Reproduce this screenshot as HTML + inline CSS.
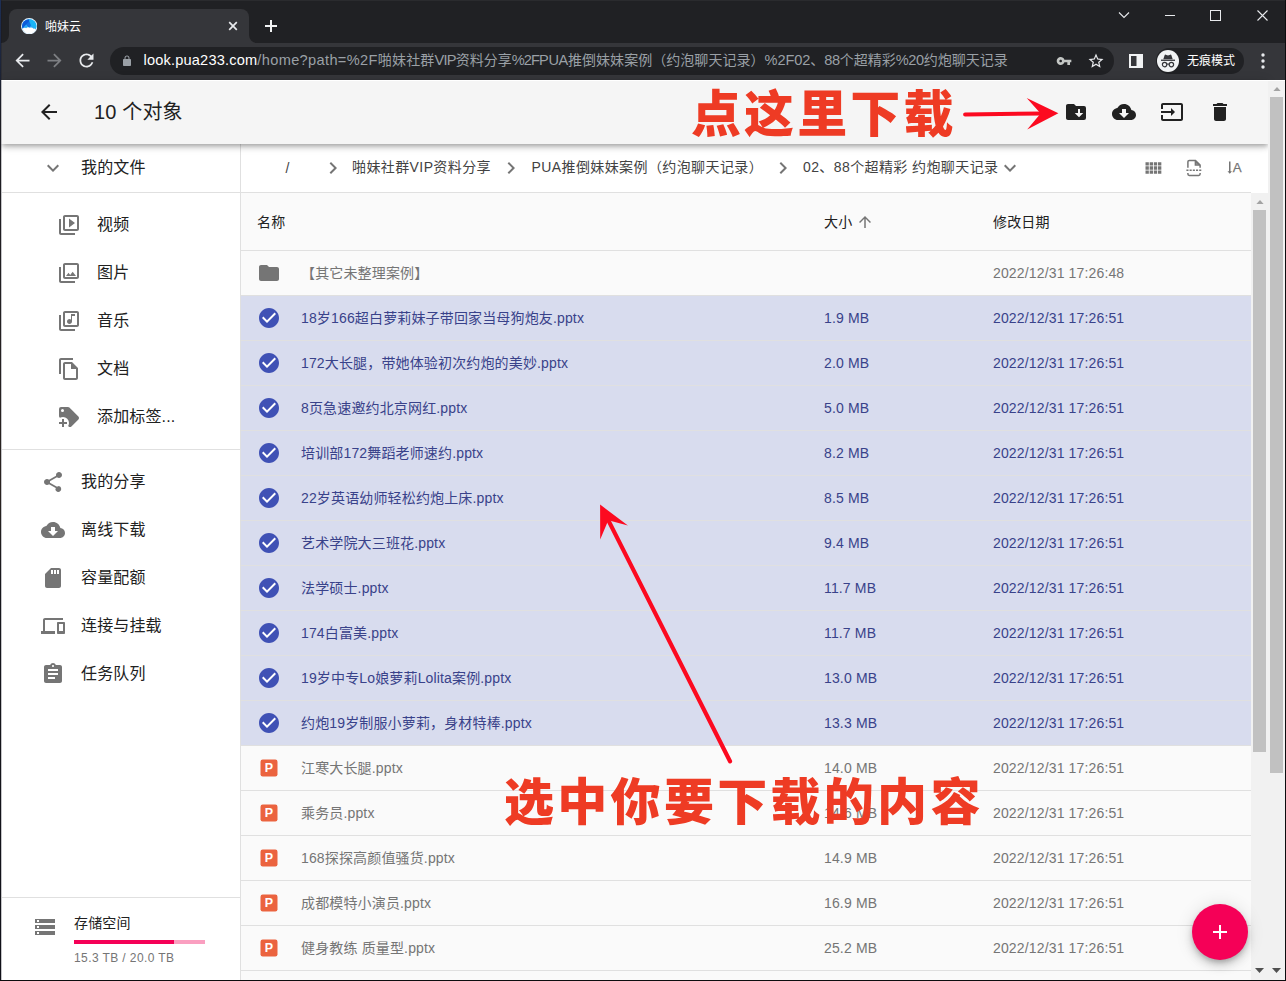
<!DOCTYPE html>
<html lang="zh-CN">
<head>
<meta charset="utf-8">
<title>啪妹云</title>
<style>
*{box-sizing:border-box;margin:0;padding:0}
html,body{width:1286px;height:981px;overflow:hidden;background:#fff}
body{position:relative;font-family:"Liberation Sans","Noto Sans CJK SC",sans-serif;font-size:14px;color:#212121}
.abs{position:absolute}
svg{display:block}
.t{position:absolute;white-space:nowrap;line-height:1}
/* chrome */
#tabbar{left:0;top:0;width:1286px;height:43px;background:#202124;border-top:1px solid #2a2b2e}
#tab{left:9px;top:9px;width:240px;height:34px;background:#35363a;border-radius:8px 8px 0 0}
#toolbar{left:0;top:43px;width:1286px;height:37px;background:#35363a}
#pill{left:110px;top:47px;width:1004px;height:28px;border-radius:14px;background:#202124}
#incog{left:1156px;top:48px;width:88px;height:26px;border-radius:13px;background:#202124}
/* app */
#appbar,#side,#main{letter-spacing:.15px}
#appbar{left:2px;top:80px;width:1266px;height:64px;background:#f5f5f5;box-shadow:0 2px 4px -1px rgba(0,0,0,.2),0 4px 5px 0 rgba(0,0,0,.14),0 1px 10px 0 rgba(0,0,0,.12);z-index:5}
#side{left:2px;top:144px;width:238px;height:837px;background:#fff}
#main{left:240px;top:144px;width:1011px;height:837px;background:#fafafa;border-left:1px solid #e0e0e0}
.sitem{position:absolute;left:0;width:238px;height:48px}
.sitem .t{font-size:16px;color:#212121}
.bc{letter-spacing:.4px}
.hl{position:absolute;height:1px;background:#e0e0e0}
.row{position:absolute;left:1px;width:1010px;height:45px;border-bottom:1px solid #e0e0e0;color:#757575}
.row.sel{background:#d8dcee;color:#39428a}
.row .t{font-size:14px;top:15px}
.row .n{left:60px}
.row .s{left:583px}
.row .d{left:752px}
.row svg{position:absolute;left:16px;top:10px}
.anno{position:absolute;white-space:nowrap;font-family:"Noto Sans CJK SC","Liberation Sans",sans-serif;font-weight:900;color:#ee3b24;line-height:1;z-index:20}
</style>
</head>
<body>
<!-- ============ browser chrome ============ -->
<div id="tabbar" class="abs"></div>
<div id="tab" class="abs"></div>
<div id="toolbar" class="abs"></div>
<div id="pill" class="abs"></div>
<div id="incog" class="abs"></div>

<!-- left tab curve hints -->
<svg class="abs" style="left:1px;top:35px" width="8" height="8"><path d="M8 0v8H0A8 8 0 0 0 8 0z" fill="#35363a"/></svg>
<svg class="abs" style="left:249px;top:35px" width="8" height="8"><path d="M0 0v8h8A8 8 0 0 1 0 0z" fill="#35363a"/></svg>
<!-- favicon -->
<svg class="abs" style="left:20.800px;top:17.800px" width="16.400" height="16.400" viewBox="0 0 16 16"><circle cx="8" cy="8" r="8" fill="#e3f2fd"/><circle cx="8" cy="8" r="6.900" fill="#29a9f5"/><path d="M8 1.100A6.900 6.900 0 0 0 1.400 10.200L5.200 6.200 8 9.400z" fill="#0d5bd8"/><path d="M8 1.100v8.300l1.800-2.300 4.700 3.600A6.900 6.900 0 0 0 8 1.100z" fill="#19b5f7"/><path d="M5.200 6.200L8 9.400 9.800 7.100 8 3.200z" fill="#1273e6"/><path d="M1.500 10.600c.9-1 2.300-1.300 3.400-.7.900-1.100 2.700-1.300 3.800-.3 1.300-.6 2.700-.2 3.400.8.900-.2 1.700 0 2.300.5A6.900 6.900 0 0 1 1.500 10.600z" fill="#fff"/></svg>
<div class="t" style="left:45px;top:21px;font-size:12px;color:#fff">啪妹云</div>
<svg class="abs" style="left:228px;top:21px" width="10" height="10" viewBox="0 0 10 10"><path d="M1.200 1.200l7.600 7.600M8.800 1.200l-7.600 7.600" stroke="#e8eaed" stroke-width="1.700" fill="none"/></svg>
<svg class="abs" style="left:264px;top:19px" width="14" height="14" viewBox="0 0 14 14"><path d="M7 1v12M1 7h12" stroke="#f1f3f4" stroke-width="2" fill="none"/></svg>
<!-- window controls -->
<svg class="abs" style="left:1118px;top:11px" width="12" height="8" viewBox="0 0 12 8"><path d="M1 1.500l5 5 5-5" stroke="#e8eaed" stroke-width="1.100" fill="none"/></svg>
<svg class="abs" style="left:1165px;top:15px" width="10" height="1" viewBox="0 0 10 1"><rect width="10" height="1" fill="#e8eaed"/></svg>
<svg class="abs" style="left:1210px;top:10px" width="11" height="11" viewBox="0 0 11 11"><rect x=".5" y=".5" width="10" height="10" stroke="#e8eaed" fill="none"/></svg>
<svg class="abs" style="left:1257px;top:10px" width="11" height="11" viewBox="0 0 11 11"><path d="M.500.500l10 10M10.500.500l-10 10" stroke="#e8eaed" stroke-width="1.100" fill="none"/></svg>
<!-- nav buttons -->
<svg class="abs" style="left:11.700px;top:50px" width="21" height="21" viewBox="0 0 24 24"><path d="M20 11H7.830l5.590-5.590L12 4l-8 8 8 8 1.410-1.410L7.830 13H20v-2z" fill="#e8eaed"/></svg>
<svg class="abs" style="left:43.700px;top:50px" width="21" height="21" viewBox="0 0 24 24"><path d="M12 4l-1.410 1.410L16.170 11H4v2h12.170l-5.580 5.590L12 20l8-8z" fill="#7d7f83"/></svg>
<svg class="abs" style="left:75.700px;top:50px" width="21" height="21" viewBox="0 0 24 24"><path d="M17.650 6.350C16.200 4.900 14.210 4 12 4c-4.420 0-7.990 3.580-7.990 8s3.570 8 7.990 8c3.730 0 6.840-2.550 7.730-6h-2.080c-.82 2.330-3.040 4-5.650 4-3.310 0-6-2.690-6-6s2.690-6 6-6c1.660 0 3.140.69 4.220 1.780L13 11h7V4l-2.350 2.350z" fill="#e8eaed"/></svg>
<!-- lock -->
<svg class="abs" style="left:120.900px;top:55px" width="12" height="12" viewBox="0 0 24 24"><path d="M18 8h-1V6c0-2.760-2.240-5-5-5S7 3.240 7 6v2H6c-1.100 0-2 .9-2 2v10c0 1.100.9 2 2 2h12c1.100 0 2-.9 2-2V10c0-1.100-.9-2-2-2zM9 6c0-1.660 1.340-3 3-3s3 1.340 3 3v2H9V6z" fill="#9aa0a6"/></svg>
<div class="t" id="url" style="left:143.500px;top:53px;font-size:14px;color:#9aa0a6;line-height:15px"><span style="font-size:14.600px;color:#fff;letter-spacing:0.18px">look.pua233.com</span><span style="font-size:14.600px;letter-spacing:0.34px">/home?path=%2F</span><span style="letter-spacing:0.2px">啪妹社群</span><span style="font-size:14.600px;letter-spacing:-0.8px">VIP</span>资料分享<span style="font-size:14.600px;letter-spacing:-0.9px">%2F</span><span style="font-size:14.600px;letter-spacing:-0.34px">PUA</span><span style="letter-spacing:0.04px">推倒妹妹案例（约泡聊天记录）</span><span style="font-size:14.600px;letter-spacing:-0.1px">%2F02</span>、<span style="font-size:14.600px;letter-spacing:-0.37px">88</span>个超精彩<span style="font-size:14.600px;letter-spacing:-0.4px">%20</span>约炮聊天记录</div>
<!-- key + star -->
<svg class="abs" style="left:1056px;top:53px" width="16" height="16" viewBox="0 0 24 24"><path d="M12.650 10C11.830 7.670 9.610 6 7 6c-3.310 0-6 2.690-6 6s2.690 6 6 6c2.610 0 4.830-1.670 5.650-4H17v4h4v-4h2v-4H12.650zM7 14c-1.100 0-2-.9-2-2s.9-2 2-2 2 .9 2 2-.9 2-2 2z" fill="#c4c7c5"/></svg>
<svg class="abs" style="left:1087px;top:52px" width="18" height="18" viewBox="0 0 24 24"><path d="M22 9.240l-7.190-.62L12 2 9.190 8.630 2 9.240l5.460 4.730L5.820 21 12 17.270 18.180 21l-1.630-7.030L22 9.240zM12 15.400l-3.760 2.270 1-4.280-3.320-2.880 4.380-.38L12 6.100l1.710 4.040 4.380.38-3.320 2.880 1 4.280L12 15.400z" fill="#e8eaed"/></svg>
<!-- side panel -->
<svg class="abs" style="left:1129px;top:54px" width="14" height="14" viewBox="0 0 14 14"><rect x="1" y="1" width="12" height="12" fill="none" stroke="#f1f3f4" stroke-width="2"/><rect x="7.500" y="1" width="5.500" height="12" fill="#f1f3f4"/></svg>
<!-- incognito avatar -->
<svg class="abs" style="left:1157px;top:50px" width="22" height="22" viewBox="0 0 22 22"><circle cx="11" cy="11" r="11" fill="#f1f3f4"/><path d="M6.300 9.200l1.300-4c.2-.5.600-.7 1.100-.5l2.300.7 2.300-.7c.5-.2.900 0 1.100.5l1.300 4z" fill="#35363a"/><rect x="4" y="9.600" width="14" height="1.300" fill="#35363a"/><circle cx="7.600" cy="14.600" r="2.200" fill="none" stroke="#35363a" stroke-width="1.200"/><circle cx="14.400" cy="14.600" r="2.200" fill="none" stroke="#35363a" stroke-width="1.200"/><path d="M9.800 14.300q1.200-.7 2.400 0" stroke="#35363a" stroke-width="1.100" fill="none"/></svg>
<div class="t" style="left:1187px;top:55px;font-size:12px;color:#fff">无痕模式</div>
<svg class="abs" style="left:1261px;top:52px" width="4" height="18" viewBox="0 0 4 18"><circle cx="2" cy="3" r="1.700" fill="#e8eaed"/><circle cx="2" cy="9" r="1.700" fill="#e8eaed"/><circle cx="2" cy="15" r="1.700" fill="#e8eaed"/></svg>
<!-- window edges -->
<div class="abs" style="left:0;top:0;width:1px;height:981px;background:linear-gradient(#1d2f55 0,#1b1b22 12%,#2a2320 50%,#17171c 60%,#101018 100%);z-index:30"></div>
<div class="abs" style="left:1px;top:0;width:1px;height:981px;background:rgba(20,20,30,.25);z-index:30"></div>
<div class="abs" style="left:1px;top:80px;width:1px;height:64px;background:#f5f5f5;z-index:6"></div>
<div class="abs" style="left:1px;top:80px;width:1284px;height:1px;background:#fff;z-index:12"></div>
<div class="abs" style="left:0;top:980px;width:1286px;height:1px;background:#0c0c0e;z-index:30"></div>
<div class="abs" style="left:1285px;top:0;width:1px;height:981px;background:#0c0c0e;z-index:30"></div>

<!-- ============ app ============ -->
<div id="appbar" class="abs">
<svg class="abs" style="left:35px;top:20px" width="24" height="24" viewBox="0 0 24 24"><path d="M20 11H7.830l5.590-5.590L12 4l-8 8 8 8 1.410-1.410L7.830 13H20v-2z" fill="#212121"/></svg>
<div class="t" style="left:92px;top:22px;font-size:20px;color:#212121">10 个对象</div>
<svg class="abs" style="left:1062px;top:20px" width="24" height="24" viewBox="0 0 24 24"><path d="M20 6a2 2 0 0 1 2 2v10a2 2 0 0 1-2 2H4c-1.110 0-2-.9-2-2V6c0-1.110.890-2 2-2h6l2 2h8m-.750 7H16V9h-2v4h-3.250L15 17.250 19.250 13z" fill="#212121"/></svg>
<svg class="abs" style="left:1110px;top:20px" width="24" height="24" viewBox="0 0 24 24"><path d="M19.350 10.040C18.670 6.590 15.640 4 12 4 9.110 4 6.600 5.640 5.350 8.040 2.340 8.360 0 10.910 0 14c0 3.310 2.690 6 6 6h13c2.760 0 5-2.240 5-5 0-2.640-2.050-4.780-4.650-4.960zM17 13l-5 5-5-5h3V9h4v4h3z" fill="#212121"/></svg>
<svg class="abs" style="left:1158px;top:20px" width="24" height="24" viewBox="0 0 24 24"><path d="M21 3.010H3c-1.100 0-2 .9-2 2V9h2V4.990h18v14.030H3V15H1v4.010c0 1.100.9 1.980 2 1.980h18c1.100 0 2-.88 2-1.980v-14c0-1.110-.9-2-2-2zM11 16l4-4-4-4v3H1v2h10v3z" fill="#212121"/></svg>
<svg class="abs" style="left:1206px;top:20px" width="24" height="24" viewBox="0 0 24 24"><path d="M6 19c0 1.100.9 2 2 2h8c1.100 0 2-.9 2-2V7H6v12zM19 4h-3.500l-1-1h-5l-1 1H5v2h14V4z" fill="#212121"/></svg>

</div>
<div id="side" class="abs">
<svg class="abs" style="left:39px;top:12px" width="24" height="24" viewBox="0 0 24 24"><path d="M16.590 8.590L12 13.170 7.410 8.590 6 10l6 6 6-6z" fill="#757575"/></svg>
<div class="t" style="left:79px;top:16px;font-size:16px">我的文件</div>
<div class="hl" style="left:0;top:48px;width:238px"></div>
<svg class="abs" style="left:55px;top:68.5px" width="24" height="24" viewBox="0 0 24 24"><path d="M4 6H2v14c0 1.100.9 2 2 2h14v-2H4V6zm16-4H8c-1.100 0-2 .9-2 2v12c0 1.100.9 2 2 2h12c1.100 0 2-.9 2-2V4c0-1.100-.9-2-2-2zm0 14H8V4h12v12zM12 5.500v9l6-4.500z" fill="#757575"/></svg>
<div class="t" style="left:95px;top:72.5px;font-size:16px">视频</div>
<svg class="abs" style="left:55px;top:116.5px" width="24" height="24" viewBox="0 0 24 24"><path d="M20 4v12H8V4h12m0-2H8c-1.100 0-2 .9-2 2v12c0 1.100.9 2 2 2h12c1.100 0 2-.9 2-2V4c0-1.100-.9-2-2-2zm-8.500 9.670l1.690 2.260 2.480-3.100L19 15H9zM2 6v14c0 1.100.9 2 2 2h14v-2H4V6H2z" fill="#757575"/></svg>
<div class="t" style="left:95px;top:120.5px;font-size:16px">图片</div>
<svg class="abs" style="left:55px;top:164.5px" width="24" height="24" viewBox="0 0 24 24"><path d="M20 2H8c-1.100 0-2 .9-2 2v12c0 1.100.9 2 2 2h12c1.100 0 2-.9 2-2V4c0-1.100-.9-2-2-2zm0 14H8V4h12v12zm-7.500-1c1.380 0 2.500-1.120 2.500-2.500V7h3V5h-4v5.510c-.42-.32-.93-.51-1.500-.51-1.380 0-2.500 1.120-2.500 2.500s1.120 2.500 2.500 2.500zM4 6H2v14c0 1.100.9 2 2 2h14v-2H4V6z" fill="#757575"/></svg>
<div class="t" style="left:95px;top:168.5px;font-size:16px">音乐</div>
<svg class="abs" style="left:55px;top:212.5px" width="24" height="24" viewBox="0 0 24 24"><path d="M16 1H4c-1.100 0-2 .9-2 2v14h2V3h12V1zm-1 4H8c-1.100 0-1.990.9-1.990 2L6 21c0 1.100.890 2 1.990 2H19c1.100 0 2-.9 2-2V11l-6-6zM8 21V7h6v5h5v9H8z" fill="#757575"/></svg>
<div class="t" style="left:95px;top:216.5px;font-size:16px">文档</div>
<svg class="abs" style="left:55px;top:260.5px" width="24" height="24" viewBox="0 0 24 24"><path d="M21.410 11.580l-9-9C12.040 2.210 11.530 2 11 2H4a2 2 0 0 0-2 2v7c0 .530.210 1.040.590 1.410l.410.400C3.900 12.270 4.940 12 6 12a6 6 0 0 1 6 6c0 1.060-.280 2.090-.820 3l.400.400c.370.380.890.600 1.420.600.530 0 1.040-.210 1.410-.590l7-7c.380-.370.590-.880.590-1.410 0-.530-.210-1.040-.590-1.420M5.500 7A1.500 1.500 0 0 1 4 5.500 1.500 1.500 0 0 1 5.500 4 1.500 1.500 0 0 1 7 5.500 1.500 1.500 0 0 1 5.500 7M10 19H7v3H5v-3H2v-2h3v-3h2v3h3v2z" fill="#757575"/></svg>
<div class="t" style="left:95px;top:264.5px;font-size:16px">添加标签...</div>
<div class="hl" style="left:0;top:305px;width:238px"></div>
<svg class="abs" style="left:39px;top:325.5px" width="24" height="24" viewBox="0 0 24 24"><path d="M18 16.080c-.76 0-1.440.3-1.960.770L8.910 12.700c.05-.23.090-.46.090-.7s-.04-.47-.09-.7l7.050-4.110c.54.5 1.250.810 2.040.810 1.660 0 3-1.340 3-3s-1.340-3-3-3-3 1.340-3 3c0 .24.040.47.090.7L8.040 9.810C7.500 9.310 6.790 9 6 9c-1.660 0-3 1.340-3 3s1.340 3 3 3c.79 0 1.500-.31 2.040-.81l7.120 4.160c-.5.210-.8.430-.8.650 0 1.610 1.310 2.920 2.920 2.920 1.610 0 2.920-1.310 2.920-2.920s-1.310-2.920-2.920-2.920z" fill="#757575"/></svg>
<div class="t" style="left:79px;top:329.5px;font-size:16px">我的分享</div>
<svg class="abs" style="left:39px;top:373.5px" width="24" height="24" viewBox="0 0 24 24"><path d="M19.350 10.040C18.670 6.590 15.640 4 12 4 9.110 4 6.600 5.640 5.350 8.040 2.340 8.360 0 10.910 0 14c0 3.310 2.690 6 6 6h13c2.760 0 5-2.240 5-5 0-2.640-2.050-4.780-4.650-4.960zM17 13l-5 5-5-5h3V9h4v4h3z" fill="#757575"/></svg>
<div class="t" style="left:79px;top:377.5px;font-size:16px">离线下载</div>
<svg class="abs" style="left:39px;top:421.5px" width="24" height="24" viewBox="0 0 24 24"><path d="M18 2h-8L4.020 8 4 20c0 1.100.9 2 2 2h12c1.100 0 2-.9 2-2V4c0-1.100-.9-2-2-2zm-6 6h-2V4h2v4zm3 0h-2V4h2v4zm3 0h-2V4h2v4z" fill="#757575"/></svg>
<div class="t" style="left:79px;top:425.5px;font-size:16px">容量配额</div>
<svg class="abs" style="left:39px;top:469.5px" width="24" height="24" viewBox="0 0 24 24"><path d="M4 6h18V4H4c-1.100 0-2 .9-2 2v11H0v3h14v-3H4V6zm19 2h-6c-.55 0-1 .45-1 1v10c0 .55.45 1 1 1h6c.55 0 1-.45 1-1V9c0-.55-.45-1-1-1zm-1 9h-4v-7h4v7z" fill="#757575"/></svg>
<div class="t" style="left:79px;top:473.5px;font-size:16px">连接与挂载</div>
<svg class="abs" style="left:39px;top:517.5px" width="24" height="24" viewBox="0 0 24 24"><path d="M19 3h-4.180C14.400 1.840 13.300 1 12 1c-1.300 0-2.400.84-2.820 2H5c-1.100 0-2 .9-2 2v14c0 1.100.9 2 2 2h14c1.100 0 2-.9 2-2V5c0-1.100-.9-2-2-2zm-7 0c.55 0 1 .45 1 1s-.45 1-1 1-1-.45-1-1 .45-1 1-1zm2 14H7v-2h7v2zm3-4H7v-2h10v2zm0-4H7V7h10v2z" fill="#757575"/></svg>
<div class="t" style="left:79px;top:521.5px;font-size:16px">任务队列</div>
<div class="hl" style="left:0;top:753px;width:238px"></div>
<svg class="abs" style="left:31px;top:771px" width="24" height="24" viewBox="0 0 24 24"><path d="M2 20h20v-4H2v4zm2-3h2v2H4v-2zM2 4v4h20V4H2zm4 3H4V5h2v2zm-4 7h20v-4H2v4zm2-3h2v2H4v-2z" fill="#757575"/></svg>
<div class="t" style="left:72px;top:772px;font-size:14px;color:#212121">存储空间</div>
<div class="abs" style="left:72px;top:796px;width:131px;height:4px;background:#fa9fc0"><div style="width:100px;height:4px;background:#f50057"></div></div>
<div class="t" style="left:72px;top:808px;font-size:12px;color:#757575;letter-spacing:.4px">15.3 TB / 20.0 TB</div>

</div>
<div id="main" class="abs">
<div class="abs" style="left:0;top:0;width:1010px;height:48px;background:#fff"></div>
<div class="hl" style="left:0;top:48px;width:1010px"></div>
<div class="t" style="left:44.5px;top:17px;font-size:14px;color:#424242">/</div>
<svg class="abs" style="left:80px;top:12px" width="24" height="24" viewBox="0 0 24 24"><path d="M10 6L8.590 7.410 13.170 12l-4.580 4.590L10 18l6-6z" fill="#757575"/></svg>
<div class="t bc" style="left:111px;top:16px;font-size:14px;color:#424242">啪妹社群VIP资料分享</div>
<svg class="abs" style="left:258px;top:12px" width="24" height="24" viewBox="0 0 24 24"><path d="M10 6L8.590 7.410 13.170 12l-4.580 4.590L10 18l6-6z" fill="#757575"/></svg>
<div class="t bc" style="left:290.5px;top:16px;font-size:14px;color:#424242">PUA推倒妹妹案例（约泡聊天记录）</div>
<svg class="abs" style="left:530px;top:12px" width="24" height="24" viewBox="0 0 24 24"><path d="M10 6L8.590 7.410 13.170 12l-4.580 4.590L10 18l6-6z" fill="#757575"/></svg>
<div class="t bc" style="left:562px;top:16px;font-size:14px;color:#424242">02、88个超精彩 约炮聊天记录</div>
<svg class="abs" style="left:757px;top:12px" width="24" height="24" viewBox="0 0 24 24"><path d="M16.590 8.590L12 13.170 7.410 8.590 6 10l6 6 6-6z" fill="#757575"/></svg>
<svg class="abs" style="left:902.300px;top:14px" width="20" height="20" viewBox="0 0 24 24"><path d="M3 9h4V5H3v4zm0 5h4v-4H3v4zm5 0h4v-4H8v4zm5 0h4v-4h-4v4zM8 9h4V5H8v4zm5-4v4h4V5h-4zm5 9h4v-4h-4v4zM3 19h4v-4H3v4zm5 0h4v-4H8v4zm5 0h4v-4h-4v4zm5 0h4v-4h-4v4zm0-14v4h4V5h-4z" fill="#757575"/></svg>
<svg class="abs" style="left:943px;top:14px" width="20" height="20" viewBox="0 0 20 20"><path d="M3.900 9.700V3.800c0-.8.600-1.400 1.400-1.400h6.200l4.600 4.600v2.700M11.400 2.600v4.500h4.500M3.900 14.900v1.100c0 .8.600 1.400 1.400 1.400h9.400c.8 0 1.400-.6 1.400-1.400v-1.100" fill="none" stroke="#757575" stroke-width="1.500"/><path d="M12.200 3.400v3h3z" fill="#757575"/><path d="M2.400 12.300h15.400" stroke="#757575" stroke-width="1.400" stroke-dasharray="2.100 1.100" fill="none"/></svg>
<svg class="abs" style="left:984px;top:14px" width="20" height="20" viewBox="0 0 20 20"><path d="M4.750 3.400v11" fill="none" stroke="#757575" stroke-width="1.500"/><path d="M2.500 13.200h4.500l-2.250 2.500z" fill="#757575"/><text x="7.700" y="13.600" font-family="Liberation Sans, sans-serif" font-size="13.300" fill="#757575" stroke="#757575" stroke-width=".25">A</text></svg>
<div class="t" style="left:16px;top:71px;font-size:14px;color:#212121">名称</div>
<div class="t" style="left:583px;top:71px;font-size:14px;color:#212121">大小</div>
<svg class="abs" style="left:615px;top:68.800px" width="18" height="18" viewBox="0 0 24 24"><path d="M4 12l1.410 1.410L11 7.830V20h2V7.830l5.580 5.590L20 12l-8-8-8 8z" fill="#757575"/></svg>
<div class="t" style="left:752px;top:71px;font-size:14px;color:#212121">修改日期</div>
<div class="hl" style="left:0;top:106px;width:1010px"></div>
<div class="row" style="left:0;top:107px"><svg width="24" height="24" viewBox="0 0 24 24"><path d="M10 4H4c-1.100 0-1.990.9-1.990 2L2 18c0 1.100.9 2 2 2h16c1.100 0 2-.9 2-2V8c0-1.100-.9-2-2-2h-8l-2-2z" fill="#757575"/></svg><div class="t n">【其它未整理案例】</div><div class="t s"></div><div class="t d">2022/12/31 17:26:48</div></div>
<div class="row sel" style="left:0;top:152px"><svg width="24" height="24" viewBox="0 0 24 24"><circle cx="12" cy="12" r="8" fill="#fff"/><path d="M12 2C6.480 2 2 6.480 2 12s4.480 10 10 10 10-4.480 10-10S17.520 2 12 2zm-2 15l-5-5 1.410-1.410L10 14.170l7.590-7.590L19 8l-9 9z" fill="#3f51b5"/></svg><div class="t n">18岁166超白萝莉妹子带回家当母狗炮友.pptx</div><div class="t s">1.9 MB</div><div class="t d">2022/12/31 17:26:51</div></div>
<div class="row sel" style="left:0;top:197px"><svg width="24" height="24" viewBox="0 0 24 24"><circle cx="12" cy="12" r="8" fill="#fff"/><path d="M12 2C6.480 2 2 6.480 2 12s4.480 10 10 10 10-4.480 10-10S17.520 2 12 2zm-2 15l-5-5 1.410-1.410L10 14.170l7.590-7.590L19 8l-9 9z" fill="#3f51b5"/></svg><div class="t n">172大长腿，带她体验初次约炮的美妙.pptx</div><div class="t s">2.0 MB</div><div class="t d">2022/12/31 17:26:51</div></div>
<div class="row sel" style="left:0;top:242px"><svg width="24" height="24" viewBox="0 0 24 24"><circle cx="12" cy="12" r="8" fill="#fff"/><path d="M12 2C6.480 2 2 6.480 2 12s4.480 10 10 10 10-4.480 10-10S17.520 2 12 2zm-2 15l-5-5 1.410-1.410L10 14.170l7.590-7.590L19 8l-9 9z" fill="#3f51b5"/></svg><div class="t n">8页急速邀约北京网红.pptx</div><div class="t s">5.0 MB</div><div class="t d">2022/12/31 17:26:51</div></div>
<div class="row sel" style="left:0;top:287px"><svg width="24" height="24" viewBox="0 0 24 24"><circle cx="12" cy="12" r="8" fill="#fff"/><path d="M12 2C6.480 2 2 6.480 2 12s4.480 10 10 10 10-4.480 10-10S17.520 2 12 2zm-2 15l-5-5 1.410-1.410L10 14.170l7.590-7.590L19 8l-9 9z" fill="#3f51b5"/></svg><div class="t n">培训部172舞蹈老师速约.pptx</div><div class="t s">8.2 MB</div><div class="t d">2022/12/31 17:26:51</div></div>
<div class="row sel" style="left:0;top:332px"><svg width="24" height="24" viewBox="0 0 24 24"><circle cx="12" cy="12" r="8" fill="#fff"/><path d="M12 2C6.480 2 2 6.480 2 12s4.480 10 10 10 10-4.480 10-10S17.520 2 12 2zm-2 15l-5-5 1.410-1.410L10 14.170l7.590-7.590L19 8l-9 9z" fill="#3f51b5"/></svg><div class="t n">22岁英语幼师轻松约炮上床.pptx</div><div class="t s">8.5 MB</div><div class="t d">2022/12/31 17:26:51</div></div>
<div class="row sel" style="left:0;top:377px"><svg width="24" height="24" viewBox="0 0 24 24"><circle cx="12" cy="12" r="8" fill="#fff"/><path d="M12 2C6.480 2 2 6.480 2 12s4.480 10 10 10 10-4.480 10-10S17.520 2 12 2zm-2 15l-5-5 1.410-1.410L10 14.170l7.590-7.590L19 8l-9 9z" fill="#3f51b5"/></svg><div class="t n">艺术学院大三班花.pptx</div><div class="t s">9.4 MB</div><div class="t d">2022/12/31 17:26:51</div></div>
<div class="row sel" style="left:0;top:422px"><svg width="24" height="24" viewBox="0 0 24 24"><circle cx="12" cy="12" r="8" fill="#fff"/><path d="M12 2C6.480 2 2 6.480 2 12s4.480 10 10 10 10-4.480 10-10S17.520 2 12 2zm-2 15l-5-5 1.410-1.410L10 14.170l7.590-7.590L19 8l-9 9z" fill="#3f51b5"/></svg><div class="t n">法学硕士.pptx</div><div class="t s">11.7 MB</div><div class="t d">2022/12/31 17:26:51</div></div>
<div class="row sel" style="left:0;top:467px"><svg width="24" height="24" viewBox="0 0 24 24"><circle cx="12" cy="12" r="8" fill="#fff"/><path d="M12 2C6.480 2 2 6.480 2 12s4.480 10 10 10 10-4.480 10-10S17.520 2 12 2zm-2 15l-5-5 1.410-1.410L10 14.170l7.590-7.590L19 8l-9 9z" fill="#3f51b5"/></svg><div class="t n">174白富美.pptx</div><div class="t s">11.7 MB</div><div class="t d">2022/12/31 17:26:51</div></div>
<div class="row sel" style="left:0;top:512px"><svg width="24" height="24" viewBox="0 0 24 24"><circle cx="12" cy="12" r="8" fill="#fff"/><path d="M12 2C6.480 2 2 6.480 2 12s4.480 10 10 10 10-4.480 10-10S17.520 2 12 2zm-2 15l-5-5 1.410-1.410L10 14.170l7.590-7.590L19 8l-9 9z" fill="#3f51b5"/></svg><div class="t n">19岁中专Lo娘萝莉Lolita案例.pptx</div><div class="t s">13.0 MB</div><div class="t d">2022/12/31 17:26:51</div></div>
<div class="row sel" style="left:0;top:557px"><svg width="24" height="24" viewBox="0 0 24 24"><circle cx="12" cy="12" r="8" fill="#fff"/><path d="M12 2C6.480 2 2 6.480 2 12s4.480 10 10 10 10-4.480 10-10S17.520 2 12 2zm-2 15l-5-5 1.410-1.410L10 14.170l7.590-7.590L19 8l-9 9z" fill="#3f51b5"/></svg><div class="t n">约炮19岁制服小萝莉，身材特棒.pptx</div><div class="t s">13.3 MB</div><div class="t d">2022/12/31 17:26:51</div></div>
<div class="row" style="left:0;top:602px"><svg width="24" height="24" viewBox="0 0 24 24"><rect x="3.500" y="3.500" width="17" height="17" rx="2.200" fill="#eb633f"/><text x="12" y="16.300" text-anchor="middle" font-family="Liberation Sans, sans-serif" font-weight="bold" font-size="12.500" fill="#fff">P</text></svg><div class="t n">江寒大长腿.pptx</div><div class="t s">14.0 MB</div><div class="t d">2022/12/31 17:26:51</div></div>
<div class="row" style="left:0;top:647px"><svg width="24" height="24" viewBox="0 0 24 24"><rect x="3.500" y="3.500" width="17" height="17" rx="2.200" fill="#eb633f"/><text x="12" y="16.300" text-anchor="middle" font-family="Liberation Sans, sans-serif" font-weight="bold" font-size="12.500" fill="#fff">P</text></svg><div class="t n">乘务员.pptx</div><div class="t s">14.6 MB</div><div class="t d">2022/12/31 17:26:51</div></div>
<div class="row" style="left:0;top:692px"><svg width="24" height="24" viewBox="0 0 24 24"><rect x="3.500" y="3.500" width="17" height="17" rx="2.200" fill="#eb633f"/><text x="12" y="16.300" text-anchor="middle" font-family="Liberation Sans, sans-serif" font-weight="bold" font-size="12.500" fill="#fff">P</text></svg><div class="t n">168探探高颜值骚货.pptx</div><div class="t s">14.9 MB</div><div class="t d">2022/12/31 17:26:51</div></div>
<div class="row" style="left:0;top:737px"><svg width="24" height="24" viewBox="0 0 24 24"><rect x="3.500" y="3.500" width="17" height="17" rx="2.200" fill="#eb633f"/><text x="12" y="16.300" text-anchor="middle" font-family="Liberation Sans, sans-serif" font-weight="bold" font-size="12.500" fill="#fff">P</text></svg><div class="t n">成都模特小演员.pptx</div><div class="t s">16.9 MB</div><div class="t d">2022/12/31 17:26:51</div></div>
<div class="row" style="left:0;top:782px"><svg width="24" height="24" viewBox="0 0 24 24"><rect x="3.500" y="3.500" width="17" height="17" rx="2.200" fill="#eb633f"/><text x="12" y="16.300" text-anchor="middle" font-family="Liberation Sans, sans-serif" font-weight="bold" font-size="12.500" fill="#fff">P</text></svg><div class="t n">健身教练 质量型.pptx</div><div class="t s">25.2 MB</div><div class="t d">2022/12/31 17:26:51</div></div>
<div class="row" style="left:0;top:827px"></div>

</div>

<div class="abs" style="left:1268px;top:80px;width:17px;height:900px;background:#f1f1f1;z-index:10"></div>
<div class="abs" style="left:1270px;top:97px;width:13px;height:676px;background:#c1c1c1;z-index:11"></div>
<svg class="abs" style="left:1272.500px;top:87px;z-index:11" width="8" height="4" viewBox="0 0 9 5"><path d="M0 5L4.500 0 9 5z" fill="#a3a3a3"/></svg>
<svg class="abs" style="left:1272px;top:968px;z-index:11" width="9" height="5" viewBox="0 0 9 5"><path d="M0 0L4.500 5 9 0z" fill="#505050"/></svg>
<div class="abs" style="left:1251px;top:193px;width:17px;height:787px;background:#f1f1f1;z-index:10"></div>
<div class="abs" style="left:1253px;top:210px;width:13px;height:542px;background:#c1c1c1;z-index:11"></div>
<svg class="abs" style="left:1255.500px;top:200px;z-index:11" width="8" height="4" viewBox="0 0 9 5"><path d="M0 5L4.500 0 9 5z" fill="#a3a3a3"/></svg>
<svg class="abs" style="left:1255px;top:968px;z-index:11" width="9" height="5" viewBox="0 0 9 5"><path d="M0 0L4.500 5 9 0z" fill="#505050"/></svg>
<!-- FAB -->
<div class="abs" style="left:1192px;top:904px;width:56px;height:56px;border-radius:50%;background:#f50057;z-index:12;box-shadow:0 3px 5px -1px rgba(0,0,0,.2),0 6px 10px 0 rgba(0,0,0,.14),0 1px 18px 0 rgba(0,0,0,.12)"><svg style="position:absolute;left:16px;top:16px" width="24" height="24" viewBox="0 0 24 24"><path d="M19 13h-6v6h-2v-6H5v-2h6V5h2v6h6v2z" fill="#fff"/></svg></div>


<div class="anno" id="a1" style="left:691px;top:85px;font-size:50px;letter-spacing:3.100px">点这里下载</div>
<svg class="abs" style="left:0;top:0;z-index:21;pointer-events:none" width="1286" height="981" viewBox="0 0 1286 981">
<g fill="#fc0a20" stroke="none">
<path d="M965.100 114.400L1042 113.400" stroke="#fc0a20" stroke-width="4" stroke-linecap="round" fill="none"/>
<path d="M1058.400 113.300L1026.700 97.900 1040.600 113.400 1027.200 129.600z"/>
<path d="M730 761.300L609 521.600" stroke="#fc0a20" stroke-width="4.200" stroke-linecap="round" fill="none"/>
<path d="M600.100 504.600L627.900 525.500 608.300 520.200 600.200 539.500z"/>
</g>
</svg>
<div class="anno" id="a2" style="left:504px;top:773px;font-size:50px;letter-spacing:3.300px">选中你要下载的内容</div>

</body>
</html>
